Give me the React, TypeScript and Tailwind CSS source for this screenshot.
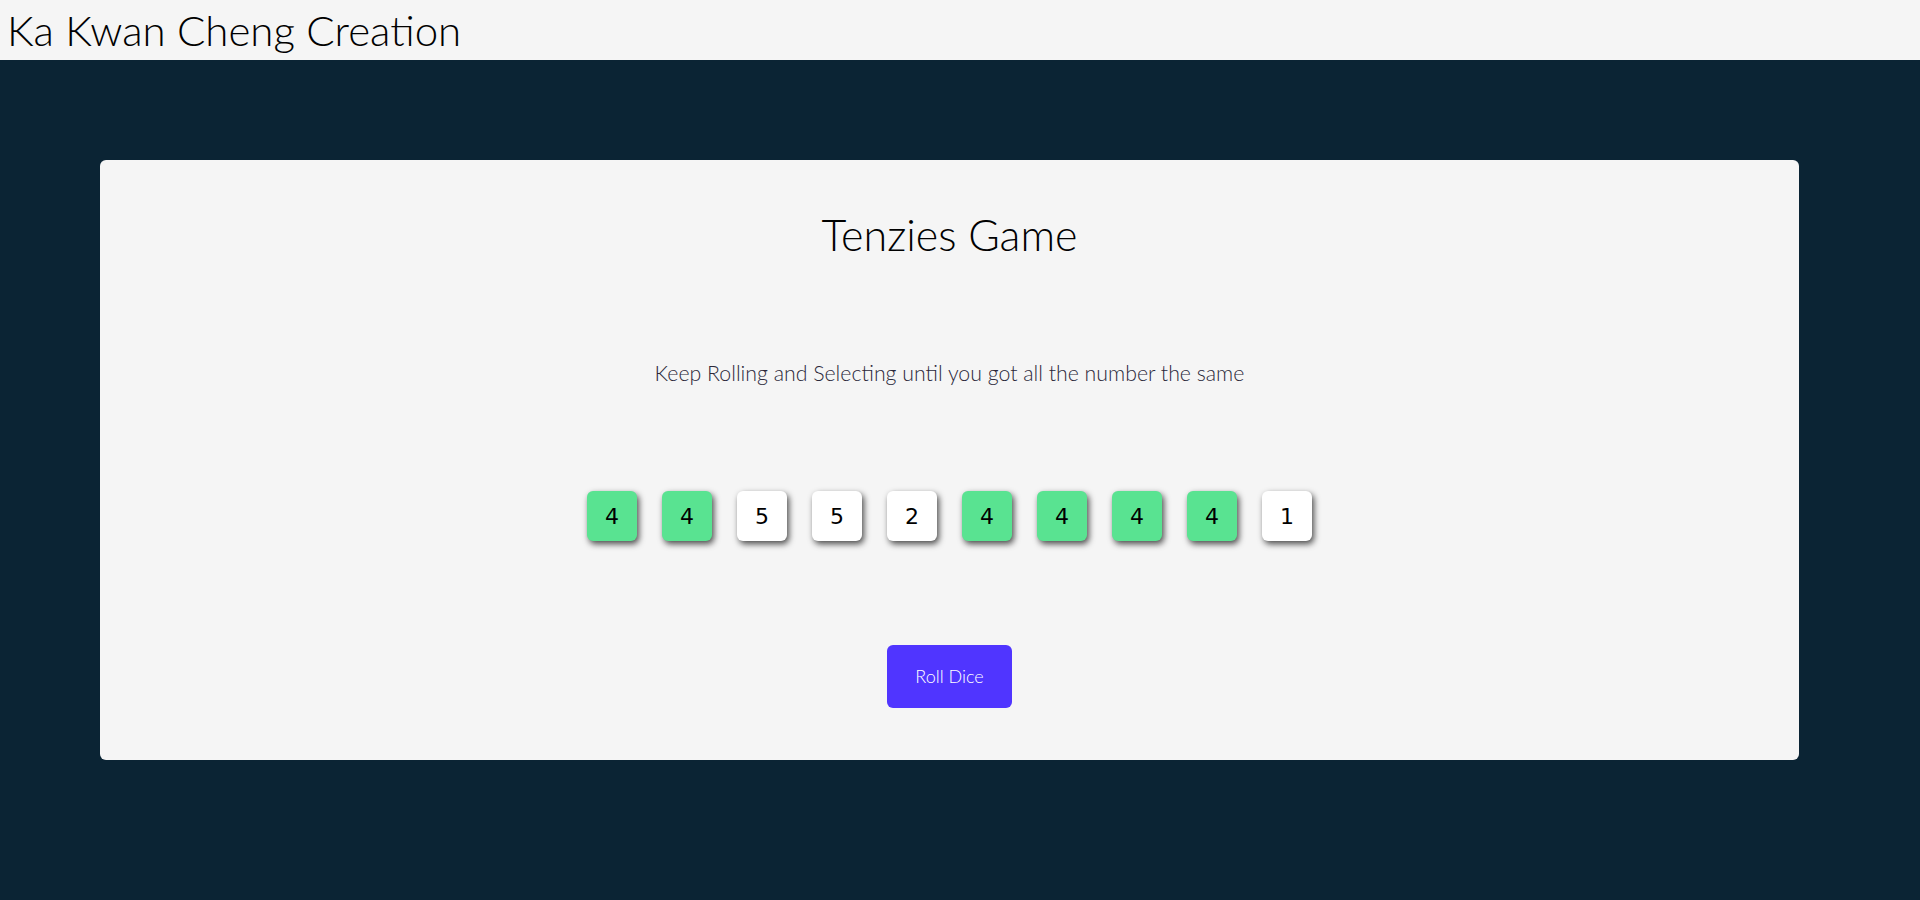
import { useState } from "react"

type Die = { value: number; held: boolean }

const startDice: Die[] = [
    { value: 4, held: true },
    { value: 4, held: true },
    { value: 5, held: false },
    { value: 5, held: false },
    { value: 2, held: false },
    { value: 4, held: true },
    { value: 4, held: true },
    { value: 4, held: true },
    { value: 4, held: true },
    { value: 1, held: false },
]

const DieFace = ({ die, onHold }: { die: Die; onHold: () => void }) => {
    return (
        <button
            onClick={onHold}
            className={
                "w-[50px] h-[50px] rounded-[6px] flex items-center justify-center text-[22px] text-black shadow-[2px_3px_6px_rgba(0,0,0,0.7)] font-['DejaVu_Sans',sans-serif] " +
                (die.held ? "bg-[#59E391]" : "bg-white")
            }
        >
            {die.value}
        </button>
    )
}

export default function App() {
    const [dice, setDice] = useState(startDice)

    const holdDie = (index: number) => {
        setDice(dice.map((d, i) => (i == index ? { ...d, held: !d.held } : d)))
    }

    const rollDice = () => {
        setDice(dice.map((d) => (d.held ? d : { ...d, value: Math.ceil(Math.random() * 6) })))
    }

    return (
        <div className="font-['Lato',sans-serif]">
            <header className="h-[60px] bg-[#F5F5F5] flex items-center pl-[7px]">
                <h1 className="text-[42px] font-light text-black leading-none">Ka Kwan Cheng Creation</h1>
            </header>
            <main className="bg-[#0B2434] min-h-[906px] pt-[100px] pl-[100px]">
                <section className="w-[1699px] h-[600px] bg-[#F5F5F5] rounded-[6px] flex flex-col items-center">
                    <h2 className="mt-[53px] text-[43px] font-light text-black leading-none">Tenzies Game</h2>
                    <p className="mt-[107px] text-[21.3px] font-light text-[#2B283A] leading-[21px]">
                        Keep Rolling and Selecting until you got all the number the same
                    </p>
                    <div className="mt-[107px] flex gap-[25px]">
                        {dice.map((d, i) => (
                            <DieFace key={i} die={d} onHold={() => holdDie(i)} />
                        ))}
                    </div>
                    <button
                        onClick={rollDice}
                        className="mt-[104px] w-[125px] h-[63px] rounded-[6px] bg-[#5035FF] text-white text-[18px] font-light"
                    >
                        Roll Dice
                    </button>
                </section>
            </main>
        </div>
    )
}
